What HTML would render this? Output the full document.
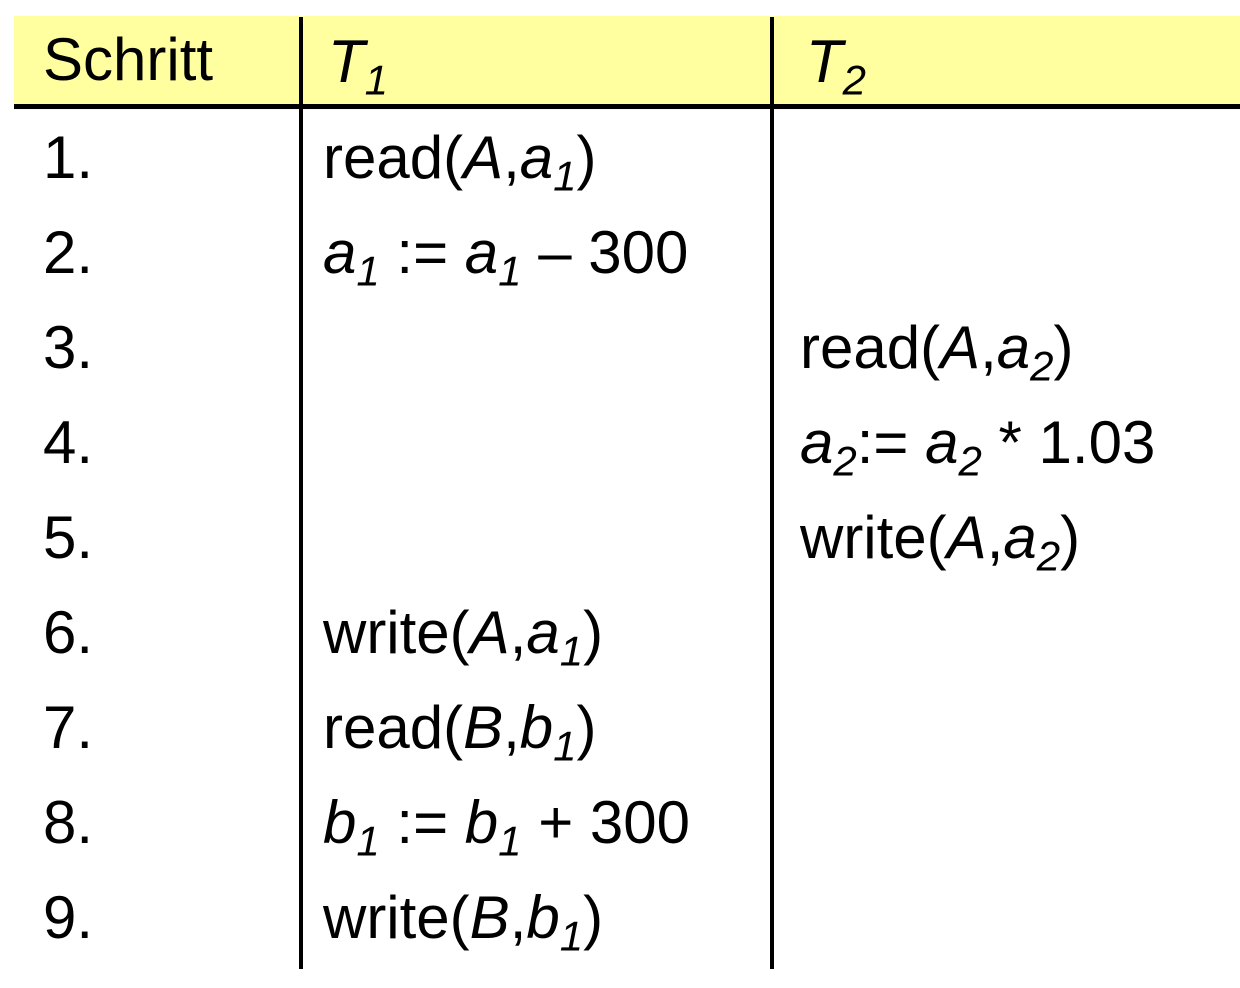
<!DOCTYPE html>
<html><head><meta charset="utf-8"><style>
body{margin:0;width:1240px;height:988px;background:#fff;position:relative;overflow:hidden;font-family:"Liberation Sans",sans-serif;font-size:60px;color:#000}
.t{position:absolute;white-space:nowrap;line-height:1}
i{font-style:italic}
sub{font-size:0.7em;vertical-align:-0.3em;font-style:italic;line-height:0}
</style></head><body>
<div style="position:absolute;left:14px;top:16px;width:1226px;height:94px;background:#ffff9f"></div>
<div style="position:absolute;left:14px;top:104px;width:1226px;height:5px;background:#000"></div>
<div style="position:absolute;left:299px;top:17px;width:4px;height:952px;background:#000"></div>
<div style="position:absolute;left:770px;top:17px;width:4px;height:952px;background:#000"></div>
<div class="t" style="left:43px;top:30px">Schritt</div>
<div class="t" style="left:328px;top:32px"><i>T<sub>1</sub></i></div>
<div class="t" style="left:806px;top:32px"><i>T<sub>2</sub></i></div>

<div class="t" style="left:43px;top:128px">1.</div>
<div class="t" style="left:43px;top:223px">2.</div>
<div class="t" style="left:43px;top:318px">3.</div>
<div class="t" style="left:43px;top:413px">4.</div>
<div class="t" style="left:43px;top:508px">5.</div>
<div class="t" style="left:43px;top:603px">6.</div>
<div class="t" style="left:43px;top:698px">7.</div>
<div class="t" style="left:43px;top:793px">8.</div>
<div class="t" style="left:43px;top:888px">9.</div>

<div class="t" style="left:323px;top:128px">read(<i>A</i>,<i>a<sub>1</sub></i>)</div>
<div class="t" style="left:323px;top:223px"><i>a<sub>1</sub></i> := <i>a<sub>1</sub></i> – 300</div>
<div class="t" style="left:800px;top:318px">read(<i>A</i>,<i>a<sub>2</sub></i>)</div>
<div class="t" style="left:800px;top:413px"><i>a<sub>2</sub></i>:= <i>a<sub>2</sub></i> * 1.03</div>
<div class="t" style="left:800px;top:508px">write(<i>A</i>,<i>a<sub>2</sub></i>)</div>
<div class="t" style="left:323px;top:603px">write(<i>A</i>,<i>a<sub>1</sub></i>)</div>
<div class="t" style="left:323px;top:698px">read(<i>B</i>,<i>b<sub>1</sub></i>)</div>
<div class="t" style="left:323px;top:793px"><i>b<sub>1</sub></i> := <i>b<sub>1</sub></i> + 300</div>
<div class="t" style="left:323px;top:888px">write(<i>B</i>,<i>b<sub>1</sub></i>)</div>
</body></html>
